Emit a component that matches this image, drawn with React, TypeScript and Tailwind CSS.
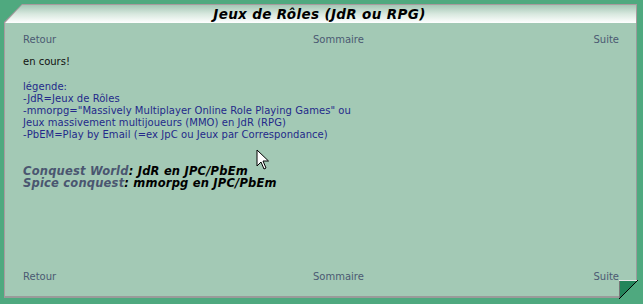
import React from "react";

const font = { fontFamily: '"DejaVu Sans", Verdana, sans-serif' };

export default function App() {
  return (
    <div className="w-[643px] h-[304px] bg-[#4fa97f] pt-[4px] pl-[4px] relative overflow-hidden" style={font}>
      <div className="w-[633px] h-[294px] flex flex-col relative">
        {/* header */}
        <div className="h-[19px] relative">
          <div
            className="absolute inset-0 bg-[#a89a9e]"
            style={{ clipPath: "polygon(18px 0, 100% 0, 100% 100%, 0 100%, 0 18px)" }}
          />
          <div
            className="absolute left-0 top-[1px] right-[1px] bottom-0 bg-gradient-to-b from-[#a4c7b5] via-[#d8e8df] to-[#ffffff] flex items-center justify-center"
            style={{ clipPath: "polygon(18px 0, 100% 0, 100% 100%, 1px 100%, 1px 18px)" }}
          >
            <span className="text-[13.5px] font-bold italic text-black leading-none tracking-[0.35px] ml-[-1px] mt-[1px]">
              Jeux de Rôles (JdR ou RPG)
            </span>
          </div>
        </div>
        {/* body */}
        <div className="flex-1 bg-[#a3c9b5] border-l border-r border-b-2 border-l-[#a89a9e] border-r-[#9a9a9a] border-b-[#9a9a9a] flex flex-col pl-[18px] pr-[17px] pt-[11px] pb-[13px] text-[10px] leading-[12px]">
          <div className="grid grid-cols-[290px_auto_1fr] text-[#4b5a72]">
            <span>Retour</span>
            <span>Sommaire</span>
            <span className="text-right">Suite</span>
          </div>
          <div className="mt-[10px]">
            <div className="text-[#111]">en cours!</div>
            <div className="h-[13px]" />
            <div className="text-[#24298a] tracking-[0.05px]">
              <div>légende:</div>
              <div>-JdR=Jeux de Rôles</div>
              <div>-mmorpg="Massively Multiplayer Online Role Playing Games" ou</div>
              <div>Jeux massivement multijoueurs (MMO) en JdR (RPG)</div>
              <div>-PbEM=Play by Email (=ex JpC ou Jeux par Correspondance)</div>
            </div>
            <div className="h-[24px]" />
            <div className="font-bold italic text-[11.5px] leading-[12px] text-black tracking-[0.2px]">
              <div>
                <span className="text-[#4a5670]">Conquest World</span>: JdR en JPC/PbEm
              </div>
              <div>
                <span className="text-[#4a5670]">Spice conquest</span>: mmorpg en JPC/PbEm
              </div>
            </div>
          </div>
          <div className="mt-auto grid grid-cols-[290px_auto_1fr] text-[#4b5a72]">
            <span>Retour</span>
            <span>Sommaire</span>
            <span className="text-right">Suite</span>
          </div>
        </div>
        {/* folded corner */}
        <svg className="absolute right-[-1px] bottom-[-1px]" width="19" height="19" viewBox="0 0 19 19">
          <polygon points="0,0 19,0 0,19" fill="#23855a" />
          <polygon points="19,0 19,19 0,19" fill="#4fa97f" />
          <line x1="0.5" y1="0" x2="0.5" y2="19" stroke="#777" />
          <line x1="0" y1="0.5" x2="19" y2="0.5" stroke="#e8e8e8" />
          <line x1="0" y1="19" x2="19" y2="0" stroke="#000" strokeWidth="1" />
        </svg>
      </div>
      {/* mouse cursor */}
      <svg className="absolute left-[256px] top-[149px]" width="14" height="22" viewBox="0 0 14 22">
        <path d="M1 1 L1 17 L5 13 L8 20 L10 19 L7 12 L12.5 12 Z" fill="#fff" stroke="#000" strokeWidth="1" strokeLinejoin="miter" />
      </svg>
    </div>
  );
}
